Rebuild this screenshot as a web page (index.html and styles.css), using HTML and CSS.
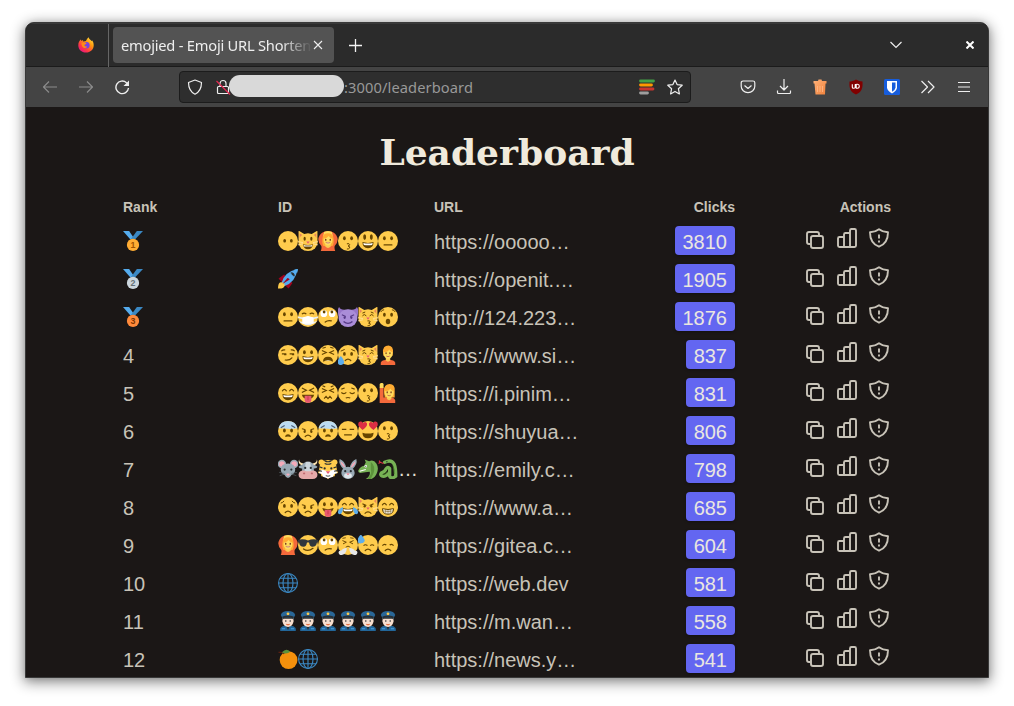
FILE: index.html
```html
<!DOCTYPE html>
<html lang="en">
<head>
<meta charset="utf-8">
<title>emojied - Emoji URL Shortener</title>
<link rel="stylesheet" href="styles.css">
</head>
<body>
<svg class="sprite" aria-hidden="true">
<defs>
  <linearGradient id="flame" x1="1" y1="0" x2="0.2" y2="1"><stop offset="0" stop-color="#fff44f"/><stop offset=".4" stop-color="#ff980e"/><stop offset=".75" stop-color="#ff3647"/><stop offset="1" stop-color="#e31587"/></linearGradient>
  <linearGradient id="bin" x1="0" y1="0" x2="1" y2="1"><stop offset="0" stop-color="#ffb27a"/><stop offset="1" stop-color="#f0813a"/></linearGradient>
  <g id="ribbon"><path d="M0 0h11l10 15h-8z" fill="#55acee"/><path d="M36 0H25L14 15h8z" fill="#3b88c3"/></g>
  <g id="face"><circle cx="18" cy="18" r="18" fill="#ffcc4d"/></g>
  <g id="eyes" fill="#664500"><ellipse cx="11.5" cy="13" rx="2.5" ry="3.5"/><ellipse cx="24.5" cy="13" rx="2.5" ry="3.5"/></g>
  <g id="low-eyes" fill="#664500"><ellipse cx="12" cy="17.5" rx="2.5" ry="3.3"/><ellipse cx="24" cy="17.5" rx="2.5" ry="3.3"/></g>
  <g id="arc-eyes" fill="none" stroke="#664500" stroke-width="2.2" stroke-linecap="round"><path d="M8 14q3.5-5 7 0M21 14q3.5-5 7 0"/></g>
  <g id="grin"><path d="M8 20q10 3 20 0q0 11-10 11T8 20z" fill="#664500"/><path d="M9.5 21.5q8.500 2 17 0l-1 3.500q-7.500 1.500-15 0z" fill="#fff"/></g>
  <g id="cat-head"><path d="M1 15V1q0-2 2-.5L12 6h12L33 .5q2-1.500 2 .5v14z" fill="#ffcc4d"/><path d="M3 4l6 4-6 5zM33 4l-6 4 6 5z" fill="#e8875a"/><ellipse cx="18" cy="20" rx="17.500" ry="16" fill="#ffcc4d"/><path d="M0 19l9 2M0 25l9-2M36 19l-9 2M36 25l-9-2" stroke="#fee7b8" stroke-width="1.200"/><path d="M15 19h6l-3 4z" fill="#e75a70"/></g>
  <g id="frown"><path d="M13 28q5-5 10 0" fill="none" stroke="#664500" stroke-width="2.200" stroke-linecap="round"/></g>
  <g id="person-head"><path d="M9 14q-1-13 10-13 9 1 8 13l-1 6H10z" fill="#ffac33"/><path d="M10 13q8 0 10-5 2 4 6 5 1 11-8 12-8-1-8-12z" fill="#ffdc5d"/><path d="M14.500 14v1.500M21.500 14v1.500" stroke="#662113" stroke-width="2" stroke-linecap="round"/><path d="M15 20q3 2 6 0" stroke="#c1694f" stroke-width="1.600" fill="none"/></g>
</defs>
<symbol id="no-mouth" viewBox="0 0 36 36"><use href="#face"/><use href="#low-eyes"/></symbol>
<symbol id="cat" viewBox="0 0 36 36"><use href="#cat-head"/><g fill="#664500"><ellipse cx="12" cy="14" rx="2" ry="3.500"/><ellipse cx="24" cy="14" rx="2" ry="3.500"/></g><path d="M9 24q9 2 18 0q-1 9-9 9T9 24z" fill="#664500"/><path d="M10 25q8 2 16 0l-1 3H11z" fill="#fff"/></symbol>
<symbol id="ok-woman" viewBox="0 0 36 36"><path d="M5 36q2-5 1-9Q-1 20 1 12 4 4 12 1h12q8 3 11 11 2 8-5 15-1 4 1 9z" fill="#f4693b"/><path d="M11 2q7-4 14 0l2 8H9z" fill="#ffdc5d"/><path d="M8 14Q8 4 18 4t10 10q1 9-2 13H10Q7 23 8 14z" fill="#ffac33"/><path d="M13 22h10v6q-5 5-10 0z" fill="#f9ca55"/><path d="M10 14q7-1 9-5 3 4 7 5 1 11-8 12-9-1-8-12z" fill="#ffdc5d"/><path d="M14 15v1.500M22 15v1.500" stroke="#662113" stroke-width="2.200" stroke-linecap="round"/><path d="M14 20.500h8q-4 4-8 0z" fill="#fff" stroke="#c1694f"/></symbol>
<symbol id="kiss" viewBox="0 0 36 36"><use href="#face"/><use href="#eyes"/><path d="M16 23q5-1 5 1.500 0 2-3 2.500 4 .5 3 3.500-1 2-5 2" fill="none" stroke="#664500" stroke-width="1.800"/></symbol>
<symbol id="smiley" viewBox="0 0 36 36"><use href="#face"/><g fill="#664500"><ellipse cx="12" cy="11" rx="2.600" ry="5"/><ellipse cx="24" cy="11" rx="2.600" ry="5"/></g><use href="#grin"/></symbol>
<symbol id="neutral" viewBox="0 0 36 36"><use href="#face"/><use href="#eyes"/><path d="M11 25h14" stroke="#664500" stroke-width="2.300" stroke-linecap="round"/></symbol>
<symbol id="rocket" viewBox="0 0 36 36"><path d="M1 17l10-7 6 6-9 9zM19 35l7-10-6-6-9 9z" fill="#a0041e"/><path d="M6 26Q11 5 35 0q-3 24-24 31z" fill="#55acee"/><path d="M0 35q0-10 5-11 7 0 7 6-2 6-12 5z" fill="#ffcc4d"/><path d="M28 2q4-2 8-2 0 4-2 8-1-4-6-6z" fill="#55acee"/><path d="M8 27l9-11q3 0 4 3z" fill="#a0041e"/><path d="M23 7q6 0 6 6M25 9l3 2" stroke="#292f33" stroke-width="2.400" fill="none"/></symbol>
<symbol id="mask" viewBox="0 0 36 36"><use href="#face"/><path d="M7 13q4-4 8 0M21 13q4-4 8 0" fill="none" stroke="#664500" stroke-width="2"/><path d="M0 17l9 2 9-2 9 2 9-2v3l-8 2v5l6-2-2 3-5 2q-9 6-18 0l-5-2-2-3 6 2v-5l-8-2z" fill="#e8eef2"/><path d="M8 19l10-3 10 3v11H8z" fill="#fff"/></symbol>
<symbol id="roll" viewBox="0 0 36 36"><use href="#face"/><circle cx="10.500" cy="12" r="6" fill="#fff"/><circle cx="25.500" cy="12" r="6" fill="#fff"/><circle cx="11" cy="9" r="2.500" fill="#664500"/><circle cx="25" cy="9" r="2.500" fill="#664500"/><path d="M13 27q5-4 11-2" fill="none" stroke="#664500" stroke-width="2.200" stroke-linecap="round"/></symbol>
<symbol id="imp" viewBox="0 0 36 36"><path d="M1 17Q-2 4 2 0q2 5 9 5h14q7 0 9-5 4 4 1 17z" fill="#9775c9"/><ellipse cx="18" cy="20" rx="17" ry="16" fill="#aa8dd8"/><path d="M7 14l7 3M29 14l-7 3" stroke="#553986" stroke-width="2"/><ellipse cx="12" cy="19" rx="2" ry="2.500" fill="#553986"/><ellipse cx="24" cy="19" rx="2" ry="2.500" fill="#553986"/><path d="M10 26q8 7 16 0" stroke="#553986" stroke-width="2.500" fill="none"/></symbol>
<symbol id="kiss-cat" viewBox="0 0 36 36"><use href="#cat-head"/><path d="M8 16q3-5 7 0M21 16q4-5 7 0M8 11l5-2M28 11l-5-2" fill="none" stroke="#664500" stroke-width="1.800"/><path d="M17 25q5-1 5 2l-3 2q4 0 3 3-1 2-5 2" fill="none" stroke="#664500" stroke-width="1.800"/></symbol>
<symbol id="hushed" viewBox="0 0 36 36"><use href="#face"/><g transform="translate(0 1)"><use href="#eyes"/></g><path d="M5 9q2-4 6-4M31 9q-2-4-6-4" fill="none" stroke="#664500" stroke-width="1.800"/><ellipse cx="18" cy="26" rx="4" ry="5" fill="#664500"/></symbol>
<symbol id="smirk" viewBox="0 0 36 36"><use href="#face"/><path d="M6 11q3-3 7-2M23 9q4-1 7 2M7 16h8M21 16h8" fill="none" stroke="#664500" stroke-width="1.900"/><path d="M11 16h4v2.500h-4zM25 16h4v2.500h-4z" fill="#664500"/><path d="M13 27q8 1 12-4" fill="none" stroke="#664500" stroke-width="2.200" stroke-linecap="round"/></symbol>
<symbol id="grinning" viewBox="0 0 36 36"><use href="#face"/><use href="#eyes"/><use href="#grin"/></symbol>
<symbol id="tired" viewBox="0 0 36 36"><use href="#face"/><path d="M7 10l8 3.500-8 3.500M29 10l-8 3.500 8 3.500M8 6l6-2M28 6l-6-2" fill="none" stroke="#664500" stroke-width="2"/><path d="M9 30q0-9 9-9t9 9q-9-4-18 0z" fill="#664500"/><path d="M12 28.500q6-2.500 12 0z" fill="#fff"/></symbol>
<symbol id="sad-sweat" viewBox="0 0 36 36"><use href="#face"/><g transform="translate(0 3)"><use href="#eyes"/></g><path d="M5 11l7-3M31 11l-7-3" stroke="#664500" stroke-width="1.800"/><use href="#frown"/><path d="M5 20q6 7 6 11t-5 5-7-5q0-4 6-11z" fill="#5dadec"/></symbol>
<symbol id="person" viewBox="0 0 36 36"><path d="M5 36v-4q1-5 13-6 12 1 13 6v4z" fill="#f4693b"/><path d="M14 22h8v6q-4 4-8 0z" fill="#f9ca55"/><use href="#person-head"/></symbol>
<symbol id="smile" viewBox="0 0 36 36"><use href="#face"/><use href="#arc-eyes"/><use href="#grin"/></symbol>
<symbol id="tongue-shut" viewBox="0 0 36 36"><use href="#face"/><path d="M7 9l8 4-8 4M29 9l-8 4 8 4" fill="none" stroke="#664500" stroke-width="2.200"/><path d="M7 21h22q-2 8-11 8T7 21z" fill="#664500"/><path d="M12 23h12v8q-1 5-6 5t-6-5z" fill="#e75a70"/><path d="M18 24v7" stroke="#be1931"/></symbol>
<symbol id="confounded" viewBox="0 0 36 36"><use href="#face"/><path d="M7 10l8 3.500-8 3.500M29 10l-8 3.500 8 3.500M8 5l5 2M28 5l-5 2M11 28l3.500-4 3.500 4 3.500-4 3.500 4" fill="none" stroke="#664500" stroke-width="2"/></symbol>
<symbol id="pensive" viewBox="0 0 36 36"><use href="#face"/><path d="M6 17q5 4 9 0M21 17q4 4 9 0M6 11l6-2M30 11l-6-2M14 27q4-2 8 0" fill="none" stroke="#664500" stroke-width="2"/></symbol>
<symbol id="hand-up" viewBox="0 0 36 36"><path d="M3 36V8h7v18q18-3 21 5v5z" fill="#f4693b"/><path d="M3 9V2q4-5 7 0v7z" fill="#ffdc5d"/><path d="M11 14q0-12 10-12t9 12v12H12z" fill="#ffac33"/><path d="M16 24h8v5q-4 4-8 0z" fill="#f9ca55"/><use href="#person-head" transform="translate(2 2)"/></symbol>
<symbol id="fearful" viewBox="0 0 36 36"><use href="#face"/><path d="M1 13Q4 0 18 0t17 13q-7 2-17 1T1 13z" fill="#bdddf4"/><path d="M5 12l7-4M31 12l-7-4" stroke="#4b5f78" stroke-width="2"/><g transform="translate(0 4)"><use href="#eyes"/></g><path d="M13 29q0-5 5-5t5 5q-5-2-10 0z" fill="#664500"/></symbol>
<symbol id="angry" viewBox="0 0 36 36"><use href="#face"/><path d="M7 14q4 0 7 3M29 14q-4 0-7 3" fill="none" stroke="#664500" stroke-width="1.900"/><ellipse cx="12" cy="19" rx="2" ry="2.800" fill="#664500"/><ellipse cx="24" cy="19" rx="2" ry="2.800" fill="#664500"/><use href="#frown"/></symbol>
<symbol id="expressionless" viewBox="0 0 36 36"><use href="#face"/><path d="M7 15h8M21 15h8M11 25h14" stroke="#664500" stroke-width="2.300"/></symbol>
<symbol id="heart-eyes" viewBox="0 0 36 36"><use href="#face"/><path d="M8 16L1 9Q-1 2 4 1q4-1 5 3 4-4 7 0 2 6-8 12z" fill="#dd2e44"/><path d="M28 16l7-7q2-7-3-8-4-1-5 3-4-4-7 0-2 6 8 12z" fill="#dd2e44"/><path d="M8 21q10 3 20 0q0 10-10 10T8 21z" fill="#664500"/></symbol>
<symbol id="mouse" viewBox="0 0 36 36"><circle cx="7" cy="9" r="7.500" fill="#99aab5"/><circle cx="29" cy="9" r="7.500" fill="#99aab5"/><circle cx="7" cy="9" r="5" fill="#f4abba"/><circle cx="29" cy="9" r="5" fill="#f4abba"/><path d="M5 19q0-11 13-11t13 11q0 7-7 10-2 5-6 5t-6-5q-7-3-7-10z" fill="#99aab5"/><path d="M2 24l10 2M3 30l9-3M34 24l-10 2M33 30l-9-3" stroke="#66757f"/><circle cx="12" cy="19" r="2" fill="#292f33"/><circle cx="24" cy="19" r="2" fill="#292f33"/><ellipse cx="18" cy="28" rx="3" ry="2" fill="#f4abba"/></symbol>
<symbol id="cow" viewBox="0 0 36 36"><path d="M2 1q0 6 8 7L8 12Q-1 9 2 1zM34 1q0 6-8 7l2 4q9-3 6-11z" fill="#ffe8b6"/><path d="M1 14q5-5 9-2l-1 5q-7 1-8-3zM35 14q-5-5-9-2l1 5q7 1 8-3z" fill="#99aab5"/><path d="M8 9q10-8 20 0l1 19H7z" fill="#99aab5"/><path d="M14 5h8l3 22H11z" fill="#ccd6dd"/><circle cx="13" cy="16" r="2" fill="#292f33"/><circle cx="23" cy="16" r="2" fill="#292f33"/><path d="M1 28q1-8 11-7 6 2 12 0 10-1 11 7 0 8-9 8H10q-9 0-9-8z" fill="#e6aaaa"/><ellipse cx="11" cy="26" rx="2" ry="1.500" fill="#c16b72"/><ellipse cx="25" cy="26" rx="2" ry="1.500" fill="#c16b72"/></symbol>
<symbol id="tiger" viewBox="0 0 36 36"><circle cx="6" cy="6" r="5" fill="#ffcc4d"/><circle cx="30" cy="6" r="5" fill="#ffcc4d"/><path d="M2 20Q2 2 18 2t16 18l2 5-5 1-1 5-7 1-5 4-5-4-7-1-1-5-5-1z" fill="#ffcc4d"/><path d="M18 22l12-3 5 6-6 2-2 5-9 3-9-3-2-5-6-2 5-6z" fill="#fff"/><path d="M12 3q6 4 12 0M12 8q6 3 12 0M2 14l6 2M34 14l-6 2M1 21l6 1M35 21l-6 1" fill="none" stroke="#292f33" stroke-width="2"/><circle cx="12" cy="17" r="2" fill="#292f33"/><circle cx="24" cy="17" r="2" fill="#292f33"/><path d="M14 22h8l-4 5z" fill="#e75a70"/><path d="M14 30q4 2 8 0" stroke="#292f33" stroke-width="1.500" fill="none"/></symbol>
<symbol id="rabbit" viewBox="0 0 36 36"><path d="M11 19Q0 10 3 0q9 3 12 16zM25 19Q36 10 33 0q-9 3-12 16z" fill="#99aab5"/><path d="M11 15Q4 9 5 4q6 4 8 11zM25 15q7-6 6-11-6 4-8 11z" fill="#f4abba"/><ellipse cx="18" cy="25" rx="12" ry="11" fill="#99aab5"/><ellipse cx="18" cy="30" rx="7" ry="5" fill="#e1e8ed"/><circle cx="13" cy="22" r="2" fill="#292f33"/><circle cx="23" cy="22" r="2" fill="#292f33"/><path d="M15 26h6l-3 3z" fill="#e75a70"/></symbol>
<symbol id="dragon" viewBox="0 0 36 36"><path d="M14 6L12 1l8 3q8-4 13 4 5 8 1 17-3 8-10 11H14q9-6 7-13l-8 1-9 1q-5-1-3-5 3-7 10-8z" fill="#77b255"/><path d="M23 5q9 8 5 20l-5 11h-6q9-9 6-17" fill="#5c913b"/><circle cx="14" cy="13" r="2.200" fill="#fff"/><circle cx="14" cy="13" r="1" fill="#292f33"/><path d="M3 22l11-3" stroke="#fff" stroke-width="2"/></symbol>
<symbol id="snake" viewBox="0 0 36 36"><path d="M12 6q12-6 17 3 3 7 3 22-8 6-11 0V17q-3-4-6 0-3 7-9 8-3 4 2 6 6 1 11-5" fill="none" stroke="#77b255" stroke-width="6" stroke-linecap="round" stroke-linejoin="round"/><path d="M10 8L4 6 1 8m3-2L2 3" stroke="#dd2e44" stroke-width="2" fill="none"/><circle cx="16" cy="5" r="1.300" fill="#292f33"/><path d="M27 12q3 8 2 15M9 28q5-1 8-6" stroke="#3e721d" stroke-width="1.300" fill="none"/></symbol>
<symbol id="worried" viewBox="0 0 36 36"><use href="#face"/><g transform="translate(0 3)"><use href="#eyes"/></g><path d="M5 11q4-1 6-4M31 11q-4-1-6-4" stroke="#664500" stroke-width="1.800" fill="none"/><use href="#frown"/></symbol>
<symbol id="tongue" viewBox="0 0 36 36"><use href="#face"/><use href="#eyes"/><path d="M8 20q10 4 20 0-1 8-10 8T8 20z" fill="#664500"/><path d="M12 23h12v8q-1 5-6 5t-6-5z" fill="#e75a70"/><path d="M18 24v7" stroke="#be1931"/></symbol>
<symbol id="joy" viewBox="0 0 36 36"><use href="#face"/><use href="#arc-eyes"/><use href="#grin"/><path d="M9 18q0 12-6 13-5-1-2-7 2-4 8-6zM27 18q0 12 6 13 5-1 2-7-2-4-8-6z" fill="#5dadec"/></symbol>
<symbol id="cross-cat" viewBox="0 0 36 36"><use href="#cat-head"/><path d="M8 12l7 3.500M28 12l-7 3.500" stroke="#664500" stroke-width="2"/><ellipse cx="12" cy="16.500" rx="2" ry="2.300" fill="#664500"/><ellipse cx="24" cy="16.500" rx="2" ry="2.300" fill="#664500"/><path d="M12 30q6-6 12 0" fill="none" stroke="#664500" stroke-width="2.200"/></symbol>
<symbol id="beaming" viewBox="0 0 36 36"><use href="#face"/><use href="#arc-eyes"/><path d="M8 21q10 3 20 0q0 10-10 10T8 21z" fill="#fff" stroke="#664500" stroke-width="1.800"/><path d="M9 25q9 2 18 0M14 22v8M18 22v9M22 22v8" fill="none" stroke="#664500"/></symbol>
<symbol id="cool" viewBox="0 0 36 36"><use href="#face"/><path d="M0 9q9-3 18 1 9-4 18-1v3l-2 2q-1 7-8 7-5 0-6-7-2-2-4 0-1 7-6 7-7 0-8-7l-2-2z" fill="#31373d"/><path d="M10 25q8 6 17-1" fill="none" stroke="#664500" stroke-width="2.300" stroke-linecap="round"/></symbol>
<symbol id="huff" viewBox="0 0 36 36"><use href="#face"/><path d="M8 6l6-1M28 6l-6-1M8 10l7 3-6 3M28 10l-7 3 6 3M14 22q4-4 8 0" fill="none" stroke="#664500" stroke-width="1.700"/><path d="M16 23q-1 12-9 13-5 1-6-4 0-4 5-4 1-3 10-5zM20 23q1 12 9 13 5 1 6-4 0-4-5-4-1-3-10-5z" fill="#e6e7e8"/></symbol>
<symbol id="cold-sweat" viewBox="0 0 36 36"><use href="#face"/><path d="M10 19q3-3 7 0M22 19q3-3 7 0" fill="none" stroke="#664500" stroke-width="2"/><use href="#frown"/><path d="M5-1q7 7 7 11t-6 5-7-5q0-4 6-11z" fill="#5dadec"/></symbol>
<symbol id="disappointed" viewBox="0 0 36 36"><use href="#face"/><path d="M8 19q3-4 7-1M28 19q-3-4-7-1" fill="none" stroke="#664500" stroke-width="2.200"/><use href="#frown"/></symbol>
<symbol id="globe" viewBox="0 0 36 36"><g fill="none" stroke="#3b88c3" stroke-width="2"><circle cx="18" cy="18" r="17"/><ellipse cx="18" cy="18" rx="9" ry="17"/><path d="M18 1v34M1 18h34M4 9.500h28M4 26.500h28"/></g></symbol>
<symbol id="officer" viewBox="0 0 36 36"><path d="M4 36v-4q1-6 14-6t14 6v4z" fill="#226699"/><path d="M13 24h10l-5 10z" fill="#292f33"/><path d="M8 12h20v7q-2 9-10 10Q10 28 8 19z" fill="#f7dece"/><path d="M8 11h20v5l-2-2H10l-2 2z" fill="#292f33"/><path d="M5 7q2-7 13-7t13 7l-3 6q-10-3-20 0z" fill="#2a6797"/><path d="M8 10q10-4 20 0v3q-10-3-20 0z" fill="#292f33"/><circle cx="18" cy="5" r="2.500" fill="#ffcc4d"/><circle cx="14" cy="18" r="1.400" fill="#292f33"/><circle cx="22" cy="18" r="1.400" fill="#292f33"/><path d="M15 24q3 2 6 0" stroke="#dd551f" stroke-width="1.800" fill="none"/><path d="M7 32h6M23 32h6" stroke="#55acee" stroke-width="1.500"/></symbol>
<symbol id="orange" viewBox="0 0 36 36"><circle cx="19" cy="20" r="16" fill="#f4900c"/><path d="M1 6q9-1 10 3" stroke="#662113" stroke-width="2" fill="none"/><path d="M7 6Q15-3 22 5q-7 6-15 1z" fill="#5c913b"/></symbol>
<symbol id="copy" viewBox="0 0 24 24"><rect x="8" y="10" width="12" height="12" rx="2"/><path d="M7.500 18H6a2 2 0 0 1-2-2V8a2 2 0 0 1 2-2h8a2 2 0 0 1 2 2v1.500"/></symbol>
<symbol id="stats" viewBox="0 0 24 24"><path d="M9 21H4.500A1.500 1.500 0 0 1 3 19.500v-7A1.500 1.500 0 0 1 4.500 11H9zM15 21H9V8.500A1.500 1.500 0 0 1 10.500 7H15zM19.500 21H15V4.500A1.500 1.500 0 0 1 16.500 3h3A1.500 1.500 0 0 1 21 4.500v15a1.500 1.500 0 0 1-1.500 1.500z"/></symbol>
<symbol id="report" viewBox="0 0 24 24"><path d="M12 3.200c-2.500 2-5.500 2.800-9 3 0 7 2.500 12 9 14.500 6.500-2.500 9-7.500 9-14.500-3.500-.2-6.500-1-9-3zM12 8.500v4M12 14.500v2"/></symbol>
</svg>

<div class="window">
  <header class="tabs">
    <div class="pinned">
      <svg class="firefox" viewBox="0 0 16 16"><path d="M8 15.500C3.500 15.500.300 12.400.300 8.200.300 5.500 1.500 4 2.800 2.600L3.500 4 5 3l.2 1.500L8 4C8.500 2.500 9.500 1 10.600.200 10.700 2 12.500 2.300 13.500 4l.8-.5c1 1.500 1.400 3 1.400 4.700 0 4.200-3.300 7.300-7.700 7.300z" fill="url(#flame)"/><circle cx="8.300" cy="8.300" r="3.300" fill="#7542e5"/><path d="M3.500 6c2-1.300 4-1 5.200.5L6.300 8q.5 2 3 1.500-1 2-3.300 1.500-2.500-1-2.500-5z" fill="#ff8a16"/></svg>
    </div>
    <div class="tab"><span class="tab-title">emojied - Emoji URL Shortene</span><svg class="close" viewBox="0 0 10 10"><path d="M1 1l8 8M9 1L1 9"/></svg></div>
    <svg class="plus" viewBox="0 0 13 13"><path d="M6.500 0v13M0 6.500h13"/></svg>
    <svg class="chevron" viewBox="0 0 12 8"><path d="M.5 1L6 6.500 11.500 1"/></svg>
    <svg class="quit" viewBox="0 0 8 8"><path d="M.5.500l7 7M7.500.500l-7 7"/></svg>
  </header>
  <nav class="toolbar">
    <svg class="ico dim" viewBox="0 0 16 16"><path d="M15 8H1.500M7 2.500L1.500 8 7 13.500"/></svg>
    <svg class="ico dim" viewBox="0 0 16 16"><path d="M1 8h13.500M9 2.500L14.500 8 9 13.500"/></svg>
    <svg class="ico reload" viewBox="0 0 16 16"><path d="M14.500 9a6.300 6.300 0 1 1-2-5.300L14 5"/><path d="M15 1.500V7H9.500z" class="solid"/></svg>
    <div class="address">
      <svg class="ico" viewBox="0 0 16 16"><path d="M8 1l6.500 2.500C14.500 9 12.500 13 8 15.200 3.500 13 1.500 9 1.500 3.500z"/></svg>
      <svg class="ico lock" viewBox="0 0 16 16"><path d="M5 7V4.500a3 3 0 0 1 6 0V7M3.500 7.500h9a1 1 0 0 1 1 1v5a1 1 0 0 1-1 1h-9a1 1 0 0 1-1-1v-5a1 1 0 0 1 1-1z"/><path d="M1.500 2L15 15.500" class="slash"/></svg>
      <span class="redacted"></span><span class="path">:3000/leaderboard</span>
      <svg class="lines" viewBox="0 0 16 16"><path d="M1.500 2h13" stroke="#43a047"/><path d="M1.500 6h11" stroke="#ff9800"/><path d="M1.500 10h12.500" stroke="#c9342f"/><path d="M1.500 14h7" stroke="#9e9e9e"/></svg>
      <svg class="ico" viewBox="0 0 16 16"><path d="M8 1l2.100 4.600 5.100.6-3.800 3.500 1 5.200L8 12.400l-4.400 2.500 1-5.200L.8 6.200l5.100-.6z"/></svg>
    </div>
    <div class="tools">
      <svg class="ico" viewBox="0 0 16 16"><path d="M3 2h10a1.800 1.800 0 0 1 1.800 1.800v3.500a6.800 6.300 0 0 1-13.600 0V3.800A1.800 1.800 0 0 1 3 2zM4.500 6.500L8 9.500l3.500-3"/></svg>
      <svg class="ico" viewBox="0 0 16 16"><path d="M8 0v10.500M4 7l4 4 4-4M1.500 11.500v2a1 1 0 0 0 1 1h11a1 1 0 0 0 1-1v-2"/></svg>
      <svg class="ico" viewBox="0 0 16 16"><path d="M1.500 2H6L6.500.500h3L10 2h4.500v2.500H13.500L13 15.500H3.500L2.500 4.500h-1z" fill="url(#bin)" stroke="none"/><path d="M5.500 7v6M8 7v6M10.500 7v6" stroke="#ffb98a" stroke-width=".8"/></svg>
      <svg class="ico" viewBox="0 0 16 16"><path d="M8 .5q3 2 6.500 2c.5 7-1 10.500-6.500 13C2.500 13 1 9.500 1.500 2.500 5 2.500 8 .5 8 .5z" fill="#800000" stroke="none"/><path d="M4.300 5.300v3q0 1 1.200 1t1.700-.8V5.500h1v3.800h1.300q1.800 0 1.800-2t-1.800-2H8.500" stroke="#fff" stroke-width="1.100"/></svg>
      <svg class="ico" viewBox="0 0 16 16"><rect width="16" height="16" rx="1.500" fill="#175ddc" stroke="none"/><path d="M3 2h10v6.500q0 3-5 6-5-3-5-6z" fill="#fff" stroke="none"/><path d="M8 3.500h3.500v5q0 2-3.500 4.200z" fill="#175ddc" stroke="none"/></svg>
      <svg class="ico" viewBox="0 0 16 16"><path d="M1.500 2l6 6-6 6M8 2l6 6-6 6"/></svg>
      <svg class="ico" viewBox="0 0 16 16"><path d="M2 3.500h12M2 8h12M2 12.500h12"/></svg>
    </div>
  </nav>
  <main class="page">
    <h1>Leaderboard</h1>
    <div class="row head"><span>Rank</span><span>ID</span><span>URL</span><span class="end">Clicks</span><span class="end">Actions</span></div>
    <div id="rows"></div>
  </main>
</div>
<script src="script.js"></script>
</body>
</html>
```
FILE: styles.css
```css
* { box-sizing: border-box; }
body { margin: 0; padding: 22px 25px 28px; height: 706px; overflow: hidden; background: #fff; font-family: "Liberation Sans", Arial, sans-serif; }
svg { display: block; flex: none; fill: none; }
.sprite { position: absolute; width: 0; height: 0; }
.window { width: 964px; height: 656px; border: 1px solid #393939; border-radius: 9px 9px 0 0; overflow: hidden; background: #1b1716; box-shadow: 0 3px 14px 1px rgba(0,0,0,.48), 0 1px 6px rgba(0,0,0,.1); }
.tabs { display: flex; align-items: center; height: 44px; border-top: 1px solid #3a3a3a; border-bottom: 1px solid #1b1b1b; background: #2b2b2b; }
.pinned { width: 83px; height: 43px; padding: 13px 0 0 52px; border-right: 1px solid #666; }
.firefox { width: 16px; height: 16px; }
.tab { display: flex; align-items: center; width: 221px; height: 36px; margin-left: 4px; padding-left: 8px; border-radius: 4px; background: #535353; }
.tab-title { width: 192px; white-space: nowrap; color: #eee; font: 14.67px "Noto Sans", sans-serif; letter-spacing: -.22px; -webkit-mask-image: linear-gradient(90deg, #000 160px, transparent 191px); mask-image: linear-gradient(90deg, #000 160px, transparent 191px); }
.close { width: 10px; height: 10px; stroke: #eee; stroke-width: 1.1; }
.plus { width: 13px; height: 13px; margin-left: 15px; stroke: #f4f4f4; stroke-width: 1.3; }
.chevron { width: 12px; height: 8px; margin-left: auto; stroke: #eee; stroke-width: 1.2; }
.quit { width: 8px; height: 8px; margin: 0 14px 0 64px; stroke: #fff; stroke-width: 2; }
.toolbar { display: flex; align-items: center; height: 40px; padding: 0 16px; background: #444; }
.ico { width: 16px; height: 16px; stroke: #eee; stroke-width: 1.2; stroke-linejoin: round; }
.dim { margin-right: 20px; stroke: #8b8b8b; }
.reload { stroke-width: 1.4; }
.solid { fill: #eee; stroke: none; }
.slash { stroke: #e22850; }
.address { display: flex; align-items: center; width: 512px; height: 32px; margin-left: 49px; padding: 0 7px; border: 1px solid #1c1c1c; border-radius: 4px; background: #2e2e2e; }
.lock { margin-left: 12px; }
.redacted { width: 115px; height: 22px; margin: -3px 0 0 -2px; border-radius: 11px; background: #d9d9d9; z-index: 1; }
.path { color: #999; font: 14.67px "Noto Sans", sans-serif; letter-spacing: .1px; }
.lines { width: 16px; height: 16px; margin: 0 12px 0 auto; stroke-width: 2.8; stroke-linecap: round; }
.tools { display: flex; gap: 20px; margin-left: auto; }
.page { width: 768px; margin: 0 auto; padding-top: 25px; color: #c8c3b8; }
h1 { margin: 0; height: 67px; line-height: 40px; text-align: center; color: #f0eadc; font-size: 36px; font-family: "DejaVu Serif", serif; font-weight: 700; }
.row { display: grid; grid-template-columns: 155px 156px 156px 145px 156px; align-items: center; height: 38px; font-size: 20px; white-space: nowrap; }
.head { height: 23px; align-items: start; font-size: 14px; font-weight: 700; line-height: 16px; }
.end { text-align: right; }
.text { padding-top: 2px; }
.id { display: flex; height: 23px; padding-top: 1px; }
.id span { align-self: end; line-height: 23px; color: #e5e0d5; }
.emoji { width: 20px; height: 20px; }
.badge { justify-self: end; height: 29px; padding: 2px 8px 0; margin-top: -1px; border-radius: 4px; background: #6366f1; color: #eae6e0; line-height: 29px; box-shadow: 0 1px 3px rgba(0,0,0,.3); }
.actions { display: flex; justify-content: flex-end; gap: 8px; padding-bottom: 6px; }
.actions svg { width: 24px; height: 24px; stroke: #c8c3b8; stroke-width: 1.9; stroke-linejoin: round; }
.medal-digit { font: bold 16px "Liberation Sans", sans-serif; text-anchor: middle; }
```
FILE: script.js
```js
const rows = [
  ["no-mouth cat ok-woman kiss smiley neutral", "https://ooooo…", 3810],
  ["rocket", "https://openit.…", 1905],
  ["neutral mask roll imp kiss-cat hushed", "http://124.223…", 1876],
  ["smirk grinning tired sad-sweat kiss-cat person", "https://www.si…", 837],
  ["smile tongue-shut confounded pensive kiss hand-up", "https://i.pinim…", 831],
  ["fearful angry fearful expressionless heart-eyes kiss", "https://shuyua…", 806],
  ["mouse cow tiger rabbit dragon snake …", "https://emily.c…", 798],
  ["worried angry tongue joy cross-cat beaming", "https://www.a…", 685],
  ["ok-woman cool roll huff cold-sweat disappointed", "https://gitea.c…", 604],
  ["globe", "https://web.dev", 581],
  ["officer officer officer officer officer officer", "https://m.wan…", 558],
  ["orange globe", "https://news.y…", 541]
];
const medals = [["#ffac33", "#9e5200"], ["#ccd6dd", "#627077"], ["#ff8a3b", "#7c3301"]];

function icon(name, cls) {
  return name === "…" ? "<span>…</span>" : `<svg class="${cls}" role="img" aria-label="${name}"><use href="#${name}"/></svg>`;
}

function rank(i) {
  if (i > 2) return `<span class="text">${i + 1}</span>`;
  const [disc, ink] = medals[i];
  return `<span class="id"><svg class="emoji" viewBox="0 0 36 36"><use href="#ribbon"/><circle cx="18" cy="25" r="11" fill="${disc}"/><text class="medal-digit" x="18" y="31" fill="${ink}">${i + 1}</text></svg></span>`;
}

document.getElementById("rows").innerHTML = rows.map(([id, url, clicks], i) => `
  <div class="row">${rank(i)}
    <span class="id">${id.split(" ").map(n => icon(n, "emoji")).join("")}</span>
    <span class="text">${url}</span>
    <span class="badge">${clicks}</span>
    <span class="actions">${["copy", "stats", "report"].map(n => icon(n, "action")).join("")}</span>
  </div>`).join("");
```
